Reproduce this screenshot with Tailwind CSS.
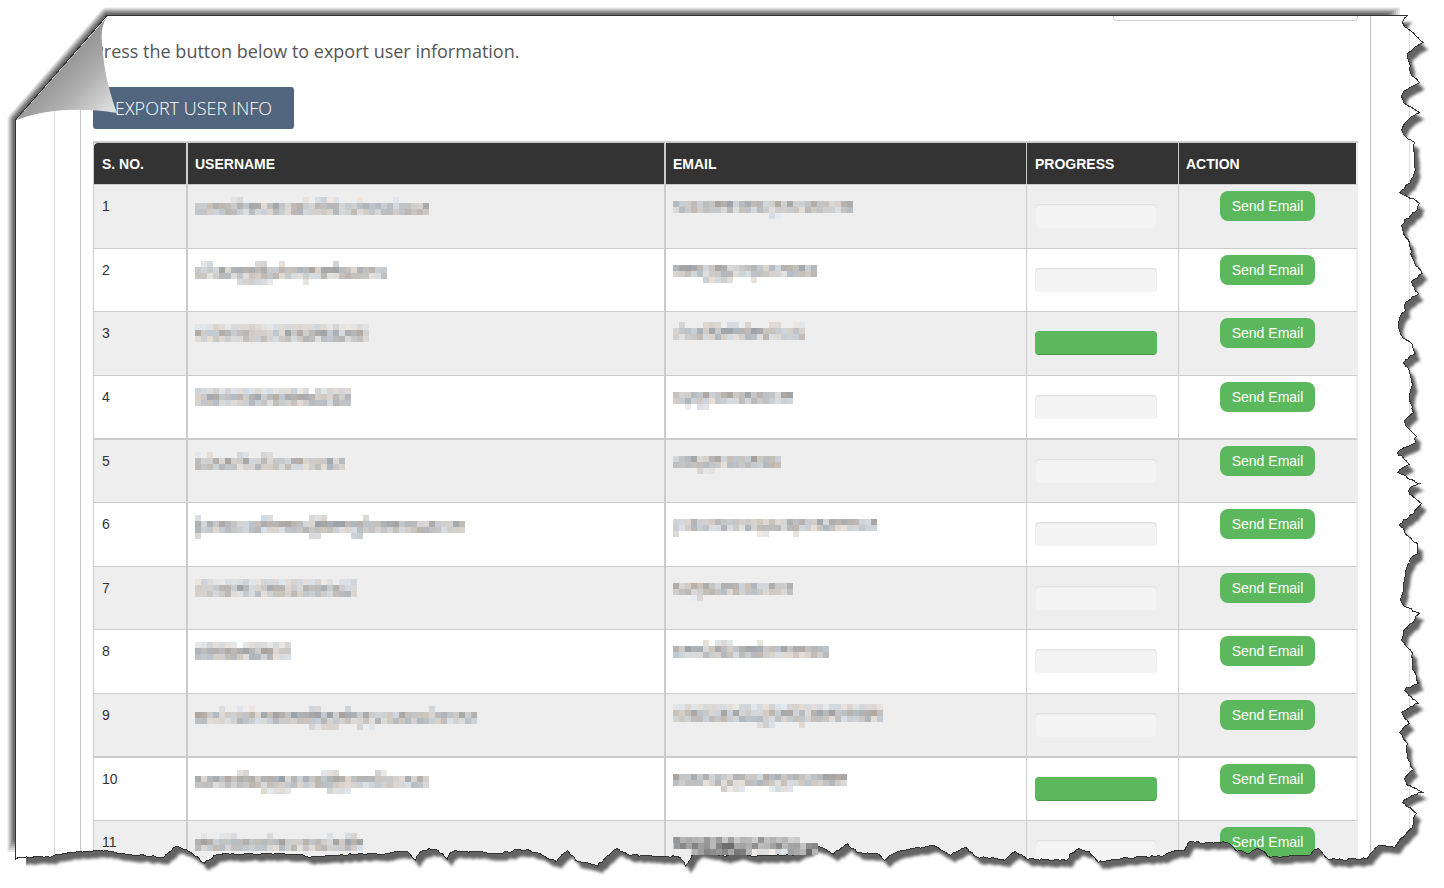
<!DOCTYPE html>
<html lang="en">
<head>
  <meta charset="UTF-8">
  <meta name="viewport" content="width=device-width, initial-scale=1.0">
  <title>Export User Info</title>
  <script src="https://cdn.jsdelivr.net/npm/@tailwindcss/browser@4"></script>
</head>
<body class="relative h-screen overflow-hidden bg-white font-['Liberation_Sans',Arial,sans-serif] text-sm text-[#333]">

  <!-- Page -->
  <div class="ml-[54px] mr-[34px] border-x border-[#ddd]">
    <main class="ml-[25px] mr-[38px] border-x border-[#c4c4c4] px-3">
      <div class="flex justify-end">
        <input type="text" aria-label="Search" class="h-[21px] w-[245px] rounded border border-[#ccc] px-2">
      </div>
      <p class="mt-4 font-['Open_Sans',sans-serif] text-lg leading-7 text-[#555]">Press the button below to export user information.</p>
      <button type="button" class="mt-[22px] block h-[42px] rounded-[3px] bg-[#51657f] px-[22px] font-['Open_Sans',sans-serif] text-lg font-light text-white">EXPORT USER INFO</button>

      <table class="mt-3 w-full table-fixed border-separate border-spacing-0 border-t-2 border-l border-[#ccc]">
        <thead>
          <tr class="h-[42px] text-left text-sm text-white">
            <th class="w-[94px] rounded-tl border-r-2 border-b border-[#ccc] bg-[#333] px-2">S. NO.</th>
            <th class="w-[478px] border-r-2 border-b border-[#ccc] bg-[#333] px-[7px]">USERNAME</th>
            <th class="border-r border-b border-[#ccc] bg-[#333] px-[7px]">EMAIL</th>
            <th class="w-[152px] border-r border-b border-[#ccc] bg-[#333] px-2">PROGRESS</th>
            <th class="w-[179px] border-r-2 border-b border-r-[#eee] border-b-[#ccc] bg-[#333] px-[7px]">ACTION</th>
          </tr>
        </thead>
        <tbody id="rows"></tbody>
      </table>
    </main>
  </div>

  <!-- Torn paper frame -->
  <svg class="pointer-events-none absolute inset-0 h-full w-full" viewBox="0 0 1444 888" preserveAspectRatio="none" aria-hidden="true">
    <defs>
      <mask id="outside" maskUnits="userSpaceOnUse" x="0" y="0" width="1444" height="888">
        <rect width="1444" height="888" fill="#fff"/>
        <path class="paper" fill="#000" shape-rendering="crispEdges"/>
      </mask>
      <clipPath id="tornSide"><path d="M26 800H1330V19H1444V888H26Z"/></clipPath>
      <filter id="soft" x="-5%" y="-5%" width="110%" height="110%"><feGaussianBlur stdDeviation="1.5"/></filter>
      <linearGradient id="curl" gradientUnits="userSpaceOnUse" x1="58" y1="62" x2="108" y2="112">
        <stop offset="0" stop-color="#929292"/>
        <stop offset="0.5" stop-color="#b0b0b0"/>
        <stop offset="1" stop-color="#dedede"/>
      </linearGradient>
    </defs>
    <g mask="url(#outside)">
      <rect width="1444" height="888" fill="#fff"/>
      <g id="edgeShade" fill="none" stroke-linejoin="round"></g>
      <g clip-path="url(#tornSide)">
        <path class="paper" fill="#636363" transform="translate(5 7)" filter="url(#soft)"/>
      </g>
    </g>
    <path class="paper" fill="none" stroke="#333" shape-rendering="crispEdges"/>
    <path d="M108 16C99 27 102 42 103 54C105 75 110 94 117 113C83 108 50 108 16 120Z" fill="url(#curl)"/>
    <g id="smudge"></g>
  </svg>

  <script>
    // n = width in blocks, up/down = columns that have an ascender or descender block
    const users = [
      { u: [39, '6,7,18,20-23,27,33', ''], e: [30, '', '16,17'], done: 0 },
      { u: [32, '1,2,10,11,14,23', '7-12,18'], e: [24, '', '5-9,13'], done: 0 },
      { u: [29, '0-28', ''], e: [22, '1,5-7,9,10,12,16,17,20,21', ''], done: 100 },
      { u: [26, '0-18,20-25', ''], e: [20, '', '2,4,5'], done: 0 },
      { u: [25, '0,2,7,8,11,12', ''], e: [18, '', '4-6'], done: 0 },
      { u: [45, '0,11,12,19-21,28', '0,19,20,26,27'], e: [34, '', '0,14,15,20'], done: 0 },
      { u: [27, '0-22,24-26', ''], e: [20, '', '3,4'], done: 0 },
      { u: [16, '0-6,8-15', ''], e: [26, '5,7-9,14', ''], done: 0 },
      { u: [47, '4,7,9,19,20,25,39', '19-23,27-29'], e: [35, '0-34', '14-16,21'], done: 0 },
      { u: [39, '7,8,21-23,30,31', '11-15,22-25'], e: [29, '', '8-11,16-19'], done: 100 },
      { u: [28, '1,4-6,12,22,25,26', ''], e: [21, '', '3-20'], done: 0 }
    ];

    function columns(list) {
      const out = [];
      for (const part of list.split(',').filter(Boolean)) {
        const [a, b] = part.split('-').map(Number);
        for (let i = a; i <= (b ?? a); i++) out.push(i);
      }
      return out;
    }

    function noise(n) {
      const v = Math.sin(n * 127.1) * 43758.5453;
      return v - Math.floor(v);
    }

    // Censored text
    function mosaic([n, up, down], seed, label) {
      let rects = '';
      const block = (col, row, base, range) => {
        const k = seed * 997 + col * 13 + row * 71;
        const g = base + noise(k) * range;
        const tint = (noise(k + 5) - 0.5) * 16;
        rects += `<rect x="${col * 6}" y="${row * 6}" width="6" height="6" fill="rgb(${Math.round(g + tint)},${Math.round(g)},${Math.round(g - tint)})"/>`;
      };
      for (let i = 0; i < n; i++) {
        block(i, 1, 162, 56);
        block(i, 2, 182, 42);
      }
      columns(up).forEach(i => block(i, 0, 210, 22));
      columns(down).forEach(i => block(i, 3, 206, 32));
      return `<svg role="img" aria-label="${label}" class="block" width="${n * 6}" height="24" shape-rendering="crispEdges">${rects}</svg>`;
    }

    document.getElementById('rows').innerHTML = users.map((user, i) => `
      <tr class="h-16 align-top odd:bg-[#eee] nth-[5n+2]:h-[63px] nth-[5n]:h-[63px] nth-[5n+4]:*:border-b-2">
        <td class="border-r-2 border-b border-[#ccc] px-2 pt-1.5 leading-[30px]">${i + 1}</td>
        <td class="border-r-2 border-b border-[#ccc] px-[7px] pt-3">${mosaic(user.u, i + 1, 'Hidden username')}</td>
        <td class="border-r border-b border-[#ccc] px-[7px] pt-2.5">${mosaic(user.e, i + 31, 'Hidden email')}</td>
        <td class="border-r border-b border-[#ccc] px-2 pt-[19px]">
          <div role="progressbar" aria-label="Progress" aria-valuenow="${user.done}" class="h-6 w-[122px] overflow-hidden rounded bg-[#f4f4f4] shadow-[inset_0_1px_2px_rgba(0,0,0,0.1)]">
            <div class="h-full bg-[#5cb85c] shadow-[inset_0_-1px_0_rgba(0,0,0,0.2)]" style="width: ${user.done}%"></div>
          </div>
        </td>
        <td class="border-r-2 border-b border-r-[#eee] border-b-[#ccc] pt-1.5 text-center">
          <button type="button" class="h-[30px] rounded-lg bg-[#5cb85c] px-3 text-white">Send Email</button>
        </td>
      </tr>`).join('');

    // Torn edge, clockwise from the top right corner to the bottom left one
    const tear = `1407,15 1402,22 1404,26 1411,31 1423,42 1417,45 1412,49 1407,53 1407,57 1409,63 1411,75 1419,82 1414,85
      1408,88 1403,91 1401,96 1403,102 1409,106 1419,112 1410,117 1404,123 1401,130 1404,135 1408,139 1414,142 1413,148
      1414,158 1415,170 1410,182 1404,188 1399,192 1407,196 1419,203 1417,209 1408,218 1401,225 1403,233 1409,242
      1412,257 1414,262 1422,273 1411,281 1418,293 1405,302 1405,310 1399,318 1399,330 1403,338 1412,344 1415,353
      1403,362 1408,368 1412,383 1409,397 1413,412 1404,420 1405,425 1410,430 1416,436 1415,442 1397,452 1409,464 1397,472
      1419,483 1409,488 1409,494 1421,503 1414,513 1399,524 1408,536 1417,543 1417,553 1410,558 1409,562 1405,573 1403,590
      1400,599 1404,606 1419,613 1413,622 1404,629 1401,640 1412,653 1413,670 1418,683 1404,690 1418,703 1401,712
      1409,723 1399,732 1407,743 1408,760 1413,769 1404,778 1407,785 1422,792 1402,802 1416,813 1412,827 1394,847
      1378,845 1370,853 1367,858 1346,860 1328,859 1318,848 1309,855 1270,857 1257,848 1249,853 1235,850 1229,843
      1188,842 1184,850 1173,851 1161,856 1118,859 1098,862 1089,851 1076,849 1066,860 1027,859 1015,851 1004,860
      977,857 965,847 950,855 933,845 895,852 884,860 877,853 857,852 847,843 833,854 815,845 793,855 753,856 737,852
      725,856 697,850 685,866 680,857 630,855 616,848 597,866 575,860 567,850 556,861 527,849 500,853 453,851 447,859
      435,849 423,850 415,860 407,851 383,854 357,854 310,857 300,854 217,854 204,863 192,853 176,846 163,857 137,855
      100,850 60,854 50,857 23,857 15,859`.trim().split(/\s+/).map(p => p.split(',').map(Number));

    let d = 'M15.5 120L107 15.5';
    tear.forEach(([x, y], i) => {
      if (i) {
        const [px, py] = tear[i - 1];
        const steps = Math.floor(Math.hypot(x - px, y - py) / 3);
        for (let s = 1; s < steps; s++) {
          const jx = (noise(i * 31 + s) - 0.5) * 2;
          const jy = (noise(i * 57 + s) - 0.5) * 2;
          d += `L${(px + (x - px) * s / steps + jx).toFixed(1)} ${(py + (y - py) * s / steps + jy).toFixed(1)}`;
        }
      }
      d += `L${x + 0.5} ${y + 0.5}`;
    });
    d += 'Z';
    document.querySelectorAll('.paper').forEach(el => el.setAttribute('d', d));

    // Straight edges get darker towards the paper
    const shades = [[16, '#e8e8e8'], [14, '#d2d2d2'], [12, '#bcbcbc'], [10, '#a5a5a5'], [8, '#8f8f8f'], [6, '#7a7a7a'], [4, '#686868']];
    document.getElementById('edgeShade').innerHTML = shades.map(([w, c], i) =>
      `<path d="M15.5 ${852 - i * 2}V120L107 15.5H${1400 - i * 2}" stroke="${c}" stroke-width="${w}"/>`).join('');

    // Blocks of the last censored email that run over the tear
    let blocks = '';
    for (let i = 0; i < 24; i++) {
      for (let r = 0; r < 3; r++) {
        if (r === 2 && (i < 3 || i > 12 && i < 19)) continue;
        if (r === 0 && i > 20) continue;
        const g = Math.round((r ? 105 : 150) + noise(i * 17 + r * 5) * (r ? 95 : 60));
        blocks += `<rect x="${674 + i * 6}" y="${837 + r * 6}" width="6" height="6" fill="rgb(${g},${g},${g})"/>`;
      }
    }
    document.getElementById('smudge').innerHTML = blocks;
  </script>
</body>
</html>
